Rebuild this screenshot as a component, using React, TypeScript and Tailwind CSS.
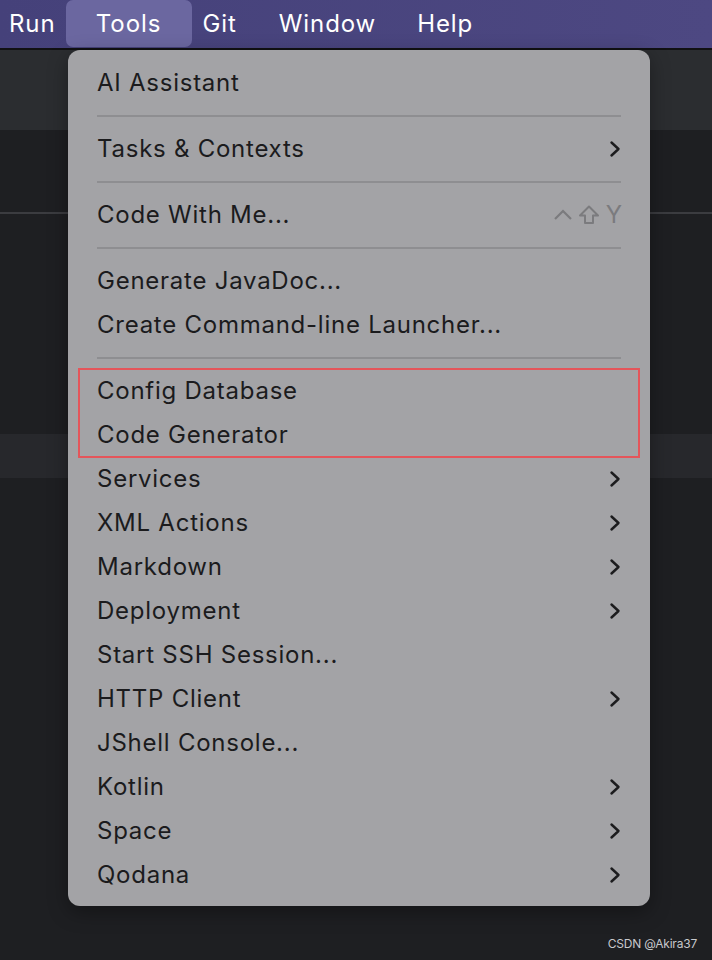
import React from "react";

type Item =
  | { kind: "item"; label: string; sub?: boolean; shortcut?: boolean }
  | { kind: "sep" };

const Chevron = () => (
  <svg width="14" height="18" viewBox="0 0 14 18" fill="none" className="shrink-0">
    <path d="M3.5 2.5 L10.5 9 L3.5 15.5" stroke="#1c1c1e" strokeWidth="2.4" strokeLinecap="round" strokeLinejoin="round" />
  </svg>
);

const Shortcut = () => (
  <div className="flex items-center gap-[4px] text-[#7b7b7e]">
    <svg width="22" height="16" viewBox="0 0 22 16" fill="none">
      <path d="M3 12 L11 4 L19 12" stroke="#7b7b7e" strokeWidth="2.2" />
    </svg>
    <svg width="22" height="22" viewBox="0 0 22 22" fill="none">
      <path d="M11 2.5 L20 11.5 L15 11.5 L15 19 L7 19 L7 11.5 L2 11.5 Z" stroke="#7b7b7e" strokeWidth="2" strokeLinejoin="round" />
    </svg>
    <span className="text-[24px] leading-none ml-[2px]">Y</span>
  </div>
);

const items: Item[] = [
  { kind: "item", label: "AI Assistant" },
  { kind: "sep" },
  { kind: "item", label: "Tasks & Contexts", sub: true },
  { kind: "sep" },
  { kind: "item", label: "Code With Me...", shortcut: true },
  { kind: "sep" },
  { kind: "item", label: "Generate JavaDoc..." },
  { kind: "item", label: "Create Command-line Launcher..." },
  { kind: "sep" },
];

const items2: Item[] = [
  { kind: "item", label: "Services", sub: true },
  { kind: "item", label: "XML Actions", sub: true },
  { kind: "item", label: "Markdown", sub: true },
  { kind: "item", label: "Deployment", sub: true },
  { kind: "item", label: "Start SSH Session..." },
  { kind: "item", label: "HTTP Client", sub: true },
  { kind: "item", label: "JShell Console..." },
  { kind: "item", label: "Kotlin", sub: true },
  { kind: "item", label: "Space", sub: true },
  { kind: "item", label: "Qodana", sub: true },
];

function Row({ it }: { it: Item }) {
  if (it.kind === "sep") {
    return (
      <div className="h-[22px] flex items-center px-[29px]">
        <div className="h-[2px] w-full bg-[#8e8e91]" />
      </div>
    );
  }
  return (
    <div className="h-[44px] flex items-center justify-between pl-[29px] pr-[28px]">
      <span className="text-[24px] leading-none tracking-[0.75px] text-[#1b1b1d]">{it.label}</span>
      {it.sub && <Chevron />}
      {it.shortcut && <Shortcut />}
    </div>
  );
}

export default function App() {
  return (
    <div
      className="relative w-[712px] h-[960px] overflow-hidden bg-[#1e1f22]"
      style={{ fontFamily: "Inter, 'Noto Sans', sans-serif" }}
    >
      {/* menu bar */}
      <div className="h-[48px] bg-gradient-to-r from-[#45417a] to-[#4d4882] flex items-center text-white text-[24px] tracking-[0.9px]">
        <div className="pl-[9px] pr-[10px]">Run</div>
        <div className="h-[47px] self-start w-[126px] rounded-[7px] bg-[#6b67a0] flex items-center justify-center">
          Tools
        </div>
        <div className="pl-[11px] pr-[42px]">Git</div>
        <div className="pr-[41px]">Window</div>
        <div>Help</div>
      </div>
      <div className="h-[2px] bg-[#111113]" />
      {/* editor background bands */}
      <div className="h-[80px] bg-[#2b2d30]" />
      <div className="h-[82px] bg-[#1e1f22]" />
      <div className="h-[2px] bg-[#3b3c40]" />
      <div className="h-[220px] bg-[#1e1f22]" />
      <div className="h-[44px] bg-[#27282c]" />

      {/* dropdown */}
      <div className="absolute left-[68px] top-[50px] w-[582px] h-[856px] rounded-[12px] bg-[#a3a3a6] pt-[11px] shadow-[0_6px_20px_rgba(0,0,0,0.35)]">
        {items.map((it, i) => (
          <Row key={i} it={it} />
        ))}
        <div className="mx-[10px] border-2 border-[#e4555a] -my-[1px]">
          <div className="-mx-[12px] -my-[1px]">
            <Row it={{ kind: "item", label: "Config Database" }} />
            <Row it={{ kind: "item", label: "Code Generator" }} />
          </div>
        </div>
        {items2.map((it, i) => (
          <Row key={i} it={it} />
        ))}
      </div>

      <div className="absolute right-[15px] bottom-[10px] text-[12px] tracking-[-0.2px] text-[#c8c8cc] leading-none">
        CSDN @Akira37
      </div>
    </div>
  );
}
